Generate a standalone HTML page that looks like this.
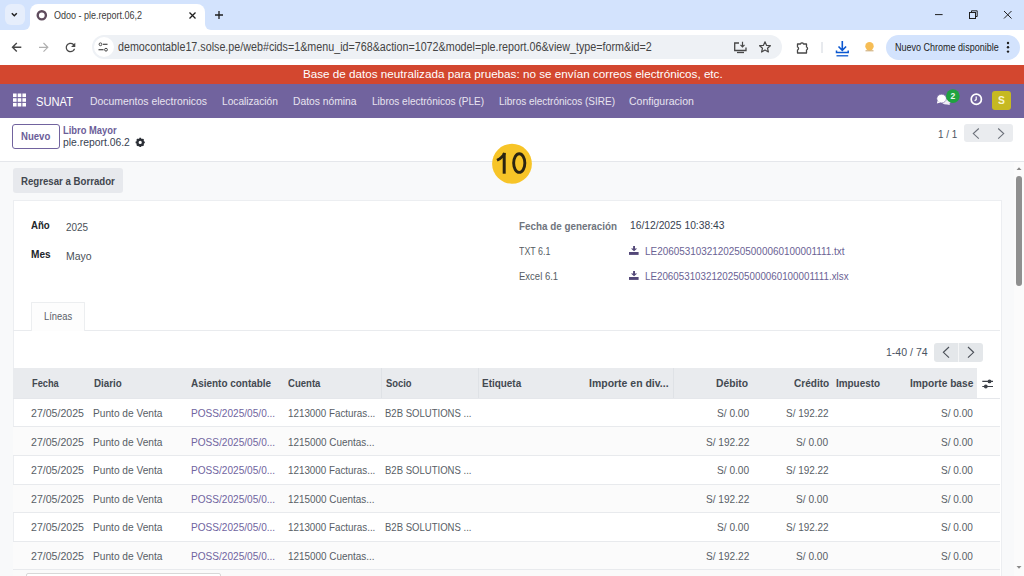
<!DOCTYPE html>
<html><head><meta charset="utf-8">
<style>
*{box-sizing:border-box;margin:0;padding:0}
html,body{width:1024px;height:576px;overflow:hidden;font-family:"Liberation Sans",sans-serif;background:#fff;position:relative}
.t{position:absolute;white-space:nowrap;line-height:1;transform-origin:0 0}
.b{position:absolute}
svg{position:absolute;overflow:visible}
</style></head><body>
<!-- tab strip -->
<div class="b" style="left:0;top:0;width:1024px;height:30px;background:#d3e3fd"></div>
<!-- active tab -->
<div class="b" style="left:30px;top:4px;width:175px;height:27px;background:#fff;border-radius:8px 8px 0 0"></div>
<div class="b" style="left:24px;top:24px;width:6px;height:6px;background:#fff"></div>
<div class="b" style="left:18px;top:18px;width:12px;height:12px;background:#d3e3fd;border-radius:0 0 6px 0"></div>
<div class="b" style="left:205px;top:24px;width:6px;height:6px;background:#fff"></div>
<div class="b" style="left:205px;top:18px;width:12px;height:12px;background:#d3e3fd;border-radius:0 0 0 6px"></div>
<div class="b" style="left:4.5px;top:4px;width:20.5px;height:21px;border-radius:6px;background:#e6eefc"></div>
<svg style="left:0;top:0" width="1024" height="30">
  <path d="M11.8 13.3 L14.3 15.8 L16.8 13.3" fill="none" stroke="#1f1f1f" stroke-width="1.5"/>
</svg>
<svg style="left:0;top:0" width="1024" height="30">
  <circle cx="41.8" cy="15.3" r="4.1" fill="none" stroke="#5f4c5d" stroke-width="2.4"/>
  <path d="M189.5 12.5 L195.5 18.5 M195.5 12.5 L189.5 18.5" stroke="#1f1f1f" stroke-width="1.3"/>
  <path d="M219 11 V19 M215 15 H223" stroke="#1f1f1f" stroke-width="1.3"/>
  <path d="M935 14.6 H942.6" stroke="#1f1f1f" stroke-width="1"/>
  <rect x="969.5" y="12.5" width="6" height="6" fill="none" stroke="#1f1f1f" stroke-width="1"/>
  <path d="M971.5 12.5 V10.8 H977.2 V16.5 H975.5" fill="none" stroke="#1f1f1f" stroke-width="1"/>
  <path d="M1004 11 L1011.5 18.5 M1011.5 11 L1004 18.5" stroke="#1f1f1f" stroke-width="1"/>
</svg>
<!-- toolbar -->
<div class="b" style="left:0;top:30px;width:1024px;height:35px;background:#fff"></div>
<div class="b" style="left:92px;top:35px;width:690px;height:24px;border-radius:12px;background:#eef1f5"></div>
<div class="b" style="left:94px;top:37px;width:20px;height:20px;border-radius:10px;background:#fff"></div>
<div class="b" style="left:886px;top:35px;width:134px;height:25px;border-radius:12.5px;background:#d3e3fd"></div>
<svg style="left:0;top:0" width="1024" height="65">
  <!-- back -->
  <path d="M21.3 47.3 H12.8 M16.8 43 L12.5 47.3 L16.8 51.6" fill="none" stroke="#474747" stroke-width="1.4"/>
  <!-- forward -->
  <path d="M39 47.3 H47.5 M43.5 43 L47.8 47.3 L43.5 51.6" fill="none" stroke="#b0b0b0" stroke-width="1.2"/>
  <!-- reload -->
  <path transform="translate(63.3 40.3) scale(0.6)" d="M17.65 6.35A7.958 7.958 0 0012 4c-4.42 0-7.99 3.58-7.99 8s3.57 8 7.99 8c3.73 0 6.84-2.55 7.73-6h-2.08A5.99 5.99 0 0112 18c-3.31 0-6-2.69-6-6s2.69-6 6-6c1.66 0 3.14.69 4.22 1.78L13 11h7V4l-2.35 2.35z" fill="#474747"/>
  <!-- tune icon -->
  <circle cx="100.5" cy="44.3" r="1.4" fill="none" stroke="#474747" stroke-width="1"/>
  <path d="M103 44.3 H107.5" stroke="#474747" stroke-width="1.2"/>
  <circle cx="106" cy="49.7" r="1.4" fill="none" stroke="#474747" stroke-width="1"/>
  <path d="M98.5 49.7 H103.6" stroke="#474747" stroke-width="1.2"/>
  <!-- install -->
  <path d="M739 43 H734.7 V50.5 H746 V47.5" fill="none" stroke="#474747" stroke-width="1.3"/>
  <path d="M737 52.5 H744" stroke="#474747" stroke-width="1.3"/>
  <path d="M742.5 41.8 V46.5 M740.5 44.8 L742.5 46.8 L744.5 44.8" fill="none" stroke="#474747" stroke-width="1.2"/>
  <!-- star -->
  <path d="M765 41.8 L766.6 45.4 L770.4 45.7 L767.5 48.2 L768.4 52 L765 50 L761.6 52 L762.5 48.2 L759.6 45.7 L763.4 45.4 Z" fill="none" stroke="#474747" stroke-width="1.2" stroke-linejoin="round"/>
  <!-- puzzle -->
  <path d="M797.5 44 H800.5 A1.6 1.6 0 0 1 803.5 44 H806.5 V47 A1.6 1.6 0 0 1 806.5 50 V53 H797.5 V50 A1.6 1.6 0 0 0 797.5 47 Z" fill="none" stroke="#474747" stroke-width="1.3" stroke-linejoin="round"/>
  <path d="M822 42 V53" stroke="#d0d5dd" stroke-width="1"/>
  <!-- download -->
  <path d="M842.3 41 V50 M838.5 46.5 L842.3 50.3 L846.1 46.5" fill="none" stroke="#0b57d0" stroke-width="1.6"/>
  <path d="M836.5 50.5 V52.5 H848.2 V50.5" fill="none" stroke="#0b57d0" stroke-width="1.5"/>
  <path d="M836.5 55.8 H848.2" stroke="#0b57d0" stroke-width="1.3"/>
  <!-- orange -->
  <circle cx="869.5" cy="46.2" r="4.2" fill="#f6bd55"/>
  <path d="M865.5 50.8 H873.5" stroke="#c9a46a" stroke-width="1"/>
  <!-- dots -->
  <circle cx="1008" cy="43" r="1.2" fill="#1f1f1f"/>
  <circle cx="1008" cy="47.3" r="1.2" fill="#1f1f1f"/>
  <circle cx="1008" cy="51.6" r="1.2" fill="#1f1f1f"/>
</svg>
<!-- banner -->
<div class="b" style="left:0;top:65px;width:1024px;height:18.5px;background:#d3472f"></div>
<!-- navbar -->
<div class="b" style="left:0;top:83.5px;width:1024px;height:34px;background:#71639e"></div>
<svg style="left:0;top:0" width="1024" height="118">
  <g fill="#fff">
    <rect x="13" y="93.5" width="3.6" height="3.6"/><rect x="17.7" y="93.5" width="3.6" height="3.6"/><rect x="22.4" y="93.5" width="3.6" height="3.6"/>
    <rect x="13" y="98.2" width="3.6" height="3.6"/><rect x="17.7" y="98.2" width="3.6" height="3.6"/><rect x="22.4" y="98.2" width="3.6" height="3.6"/>
    <rect x="13" y="102.9" width="3.6" height="3.6"/><rect x="17.7" y="102.9" width="3.6" height="3.6"/><rect x="22.4" y="102.9" width="3.6" height="3.6"/>
  </g>
  <!-- chat -->
  <ellipse cx="946.3" cy="101.8" rx="4.3" ry="2.7" fill="#f0eef8"/>
  <path d="M948.5 103.5 L950.6 104.9 L947 104.6 Z" fill="#f0eef8"/>
  <ellipse cx="941.6" cy="98.6" rx="4.8" ry="4.3" fill="#fff" stroke="#71639e" stroke-width="0.6"/>
  <path d="M937.6 100.8 L936.9 103.4 L940.2 102.5 Z" fill="#fff"/>
  <circle cx="952.9" cy="96.1" r="6.8" fill="#1fa33f"/>
  <!-- clock -->
  <circle cx="976.3" cy="99.3" r="5.1" fill="none" stroke="#fff" stroke-width="1.7"/>
  <path d="M976.2 96.4 V99.6 L974.6 100.8" fill="none" stroke="#fff" stroke-width="1.2"/>
</svg>
<div class="b" style="left:991.9px;top:90.6px;width:19.3px;height:19.3px;border-radius:3px;background:#c6b921"></div>
<!-- control panel -->
<div class="b" style="left:0;top:117.5px;width:1024px;height:43.5px;background:#fff"></div>
<div class="b" style="left:12px;top:124px;width:47.5px;height:24.5px;border:1px solid #71639e;border-radius:3px;background:#fff"></div>
<svg style="left:0;top:0" width="1024" height="160">
  <!-- gear -->
  <g transform="translate(140.2 142.4)">
    <circle r="2.75" fill="none" stroke="#2b2f36" stroke-width="2.3"/>
    <g stroke="#2b2f36" stroke-width="1.7">
      <path d="M0 -4.6 V-3 M0 4.6 V3 M-4.6 0 H-3 M4.6 0 H3 M-3.25 -3.25 L-2.1 -2.1 M3.25 3.25 L2.1 2.1 M3.25 -3.25 L2.1 -2.1 M-3.25 3.25 L-2.1 2.1"/>
    </g>
  </g>
</svg>
<div class="b" style="left:964px;top:124.3px;width:48.5px;height:18px;border-radius:3px;background:#eaecef"></div>
<svg style="left:0;top:0" width="1024" height="160">
  <path d="M978.8 128.5 L973.3 133.6 L978.8 138.7" fill="none" stroke="#6b7079" stroke-width="1.1"/>
  <path d="M998.2 128.5 L1003.7 133.6 L998.2 138.7" fill="none" stroke="#6b7079" stroke-width="1.1"/>
</svg>
<!-- main -->
<div class="b" style="left:0;top:161px;width:1024px;height:415px;background:#f8f9fa"></div>

<div class="b" style="left:12.5px;top:168px;width:110.5px;height:24.5px;border-radius:3px;background:#e7e9ed"></div>
<!-- sheet -->
<div class="b" style="left:12.5px;top:199.5px;width:989px;height:380px;background:#fff;border:1px solid #eceef1"></div>
<svg style="left:0;top:0" width="1024" height="576">
  <g fill="#534878">
    <path d="M633.1 245.9 H635 V248.6 H637.2 L634.05 251.3 L630.9 248.6 H633.1 Z"/>
    <rect x="629" y="252" width="9.6" height="2.9"/>
    <path d="M633.1 270.9 H635 V273.6 H637.2 L634.05 276.3 L630.9 273.6 H633.1 Z"/>
    <rect x="629" y="277" width="9.6" height="2.9"/>
  </g>
</svg>
<!-- tabs -->
<div class="b" style="left:13px;top:330px;width:987px;height:1px;background:#e9ebee"></div>
<div class="b" style="left:31px;top:302px;width:53.5px;height:29px;background:#fdfdfd;border:1px solid #eceef0;border-bottom:none;border-radius:1px 1px 0 0"></div>
<!-- list pager -->
<div class="b" style="left:934px;top:343px;width:48.5px;height:18.5px;border-radius:3px;background:#e4e7ea"></div>
<div class="b" style="left:958.2px;top:343px;width:1px;height:18.5px;background:#f5f6f7"></div>
<svg style="left:0;top:0" width="1024" height="576">
  <path d="M949 347 L943.4 352.3 L949 357.6" fill="none" stroke="#4b5058" stroke-width="1.15"/>
  <path d="M968 347 L973.6 352.3 L968 357.6" fill="none" stroke="#4b5058" stroke-width="1.15"/>
</svg>
<!-- table header -->
<div class="b" style="left:13px;top:368.3px;width:964px;height:30px;background:#e9ebee"></div>
<div class="b" style="left:381px;top:368.3px;width:1px;height:30px;background:#dfe2e6"></div>
<div class="b" style="left:478px;top:368.3px;width:1px;height:30px;background:#dfe2e6"></div>
<div class="b" style="left:673px;top:368.3px;width:1px;height:30px;background:#dfe2e6"></div>
<div class="b" style="left:13px;top:398px;width:987px;height:1px;background:#e5e7eb"></div>
<svg style="left:0;top:0" width="1024" height="576">
  <path d="M982.3 381.4 H993 M982.3 386.5 H993" stroke="#3d4148" stroke-width="1.1"/>
  <circle cx="989.5" cy="381.4" r="1.9" fill="#3d4148"/>
  <circle cx="985.8" cy="386.5" r="1.9" fill="#3d4148"/>
</svg>
<!-- row stripes -->
<div class="b" style="left:13px;top:427px;width:987px;height:28px;background:#fbfbfb"></div>
<div class="b" style="left:13px;top:484px;width:987px;height:28px;background:#fbfbfb"></div>
<div class="b" style="left:13px;top:541.5px;width:987px;height:28px;background:#fbfbfb"></div>
<!-- row lines -->
<div class="b" style="left:13px;top:426.2px;width:987px;height:1px;background:#e8eaed"></div>
<div class="b" style="left:13px;top:454.9px;width:987px;height:1px;background:#e8eaed"></div>
<div class="b" style="left:13px;top:483.8px;width:987px;height:1px;background:#e8eaed"></div>
<div class="b" style="left:13px;top:512.1px;width:987px;height:1px;background:#e8eaed"></div>
<div class="b" style="left:13px;top:541.1px;width:987px;height:1px;background:#e8eaed"></div>
<div class="b" style="left:13px;top:569.3px;width:987px;height:1px;background:#e8eaed"></div>
<div class="b" style="left:13px;top:570px;width:987px;height:6px;background:#fafafa"></div>
<div class="b" style="left:26px;top:573px;width:195px;height:5px;border-radius:2px;background:#fff;border:1px solid #d8d8d8"></div>
<!-- scrollbar -->
<div class="b" style="left:1013.5px;top:162px;width:10.5px;height:414px;background:#fbfbfb"></div>
<svg style="left:0;top:0" width="1024" height="576">
  <path d="M1016.5 170 L1019 167.3 L1021.5 170 Z" fill="#8a8a8a"/>
  <path d="M1016.5 566 L1019 568.7 L1021.5 566 Z" fill="#8a8a8a"/>
</svg>
<div class="b" style="left:0;top:161px;width:1024px;height:1px;background:#e5e7eb"></div>
<div class="b" style="left:1016px;top:175.5px;width:6px;height:110px;border-radius:3px;background:#8f8f8f"></div>
<!-- step badge -->
<svg style="left:0;top:0" width="1024" height="576">
  <circle cx="512" cy="163.75" r="19.9" fill="#f7c427"/>
  <path d="M504.2 152.9 V173.7" stroke="#2b2412" stroke-width="3"/>
  <path d="M497 160.2 C500.5 158.6 503.3 156.3 504.6 153" fill="none" stroke="#2b2412" stroke-width="2.8"/>
  <ellipse cx="519.25" cy="163.1" rx="5.6" ry="9.3" fill="none" stroke="#2b2412" stroke-width="2.9"/>
</svg>

<div class="t" style="left:54.00px;top:9.69px;font-size:11px;font-weight:normal;color:#3c3c3c;transform:scaleX(0.8186)">Odoo - ple.report.06,2</div>
<div class="t" style="left:118.00px;top:41.44px;font-size:12px;font-weight:normal;color:#444444;transform:scaleX(0.8939)">democontable17.solse.pe/web#cids=1&amp;menu_id=768&amp;action=1072&amp;model=ple.report.06&amp;view_type=form&amp;id=2</div>
<div class="t" style="left:895.20px;top:41.69px;font-size:11px;font-weight:normal;color:#1f1f1f;transform:scaleX(0.8193)">Nuevo Chrome disponible</div>
<div class="t" style="left:303.30px;top:69.17px;font-size:11.5px;font-weight:normal;color:#ffffff;transform:scaleX(1.0147)">Base de datos neutralizada para pruebas: no se envían correos electrónicos, etc.</div>
<div class="t" style="left:36.00px;top:95.00px;font-size:13px;font-weight:normal;color:#ffffff;transform:scaleX(0.8574)">SUNAT</div>
<div class="t" style="left:89.50px;top:95.89px;font-size:11px;font-weight:normal;color:#e8e4f0;transform:scaleX(0.9476)">Documentos electronicos</div>
<div class="t" style="left:221.60px;top:95.89px;font-size:11px;font-weight:normal;color:#e8e4f0;transform:scaleX(0.9235)">Localización</div>
<div class="t" style="left:292.60px;top:95.89px;font-size:11px;font-weight:normal;color:#e8e4f0;transform:scaleX(0.9353)">Datos nómina</div>
<div class="t" style="left:372.00px;top:95.89px;font-size:11px;font-weight:normal;color:#e8e4f0;transform:scaleX(0.9115)">Libros electrónicos (PLE)</div>
<div class="t" style="left:498.60px;top:95.89px;font-size:11px;font-weight:normal;color:#e8e4f0;transform:scaleX(0.9079)">Libros electrónicos (SIRE)</div>
<div class="t" style="left:628.80px;top:95.89px;font-size:11px;font-weight:normal;color:#e8e4f0;transform:scaleX(0.9549)">Configuracion</div>
<div class="t" style="left:950.50px;top:92.00px;font-size:8.5px;font-weight:bold;color:#e9f7ec;transform:scaleX(1.0000)">2</div>
<div class="t" style="left:997.90px;top:96.13px;font-size:10px;font-weight:bold;color:#f7f4d0;transform:scaleX(1.0286)">S</div>
<div class="t" style="left:21.05px;top:131.19px;font-size:11px;font-weight:bold;color:#6b5d98;transform:scaleX(0.8702)">Nuevo</div>
<div class="t" style="left:63.00px;top:125.11px;font-size:10.5px;font-weight:bold;color:#6b5d98;transform:scaleX(0.8916)">Libro Mayor</div>
<div class="t" style="left:63.00px;top:136.77px;font-size:11.5px;font-weight:normal;color:#374151;transform:scaleX(0.9015)">ple.report.06.2</div>
<div class="t" style="left:937.80px;top:128.69px;font-size:11px;font-weight:normal;color:#4b5563;transform:scaleX(0.9020)">1 / 1</div>
<div class="t" style="left:20.50px;top:175.69px;font-size:11px;font-weight:bold;color:#41464e;transform:scaleX(0.8774)">Regresar a Borrador</div>
<div class="t" style="left:31.00px;top:219.69px;font-size:11px;font-weight:bold;color:#212529;transform:scaleX(0.8771)">Año</div>
<div class="t" style="left:66.00px;top:221.69px;font-size:11px;font-weight:normal;color:#495057;transform:scaleX(0.9034)">2025</div>
<div class="t" style="left:31.00px;top:249.39px;font-size:11px;font-weight:bold;color:#212529;transform:scaleX(0.9163)">Mes</div>
<div class="t" style="left:66.00px;top:251.19px;font-size:11px;font-weight:normal;color:#495057;transform:scaleX(0.9522)">Mayo</div>
<div class="t" style="left:519.40px;top:220.61px;font-size:10.5px;font-weight:bold;color:#70757d;transform:scaleX(0.9381)">Fecha de generación</div>
<div class="t" style="left:629.60px;top:220.19px;font-size:11px;font-weight:normal;color:#374151;transform:scaleX(0.9364)">16/12/2025 10:38:43</div>
<div class="t" style="left:519.40px;top:245.99px;font-size:11px;font-weight:normal;color:#555b63;transform:scaleX(0.8076)">TXT 6.1</div>
<div class="t" style="left:519.40px;top:270.99px;font-size:11px;font-weight:normal;color:#555b63;transform:scaleX(0.8642)">Excel 6.1</div>
<div class="t" style="left:645.00px;top:245.99px;font-size:11px;font-weight:normal;color:#6a6294;transform:scaleX(0.9012)">LE20605310321202505000060100001111.txt</div>
<div class="t" style="left:645.00px;top:270.99px;font-size:11px;font-weight:normal;color:#6a6294;transform:scaleX(0.8898)">LE20605310321202505000060100001111.xlsx</div>
<div class="t" style="left:43.50px;top:311.19px;font-size:11px;font-weight:normal;color:#5b6068;transform:scaleX(0.8501)">Líneas</div>
<div class="t" style="left:886.00px;top:347.19px;font-size:11px;font-weight:normal;color:#4b5563;transform:scaleX(0.9584)">1-40 / 74</div>
<div class="t" style="left:31.50px;top:378.19px;font-size:11px;font-weight:bold;color:#434951;transform:scaleX(0.8417)">Fecha</div>
<div class="t" style="left:94.00px;top:378.19px;font-size:11px;font-weight:bold;color:#434951;transform:scaleX(0.8902)">Diario</div>
<div class="t" style="left:191.00px;top:378.19px;font-size:11px;font-weight:bold;color:#434951;transform:scaleX(0.9039)">Asiento contable</div>
<div class="t" style="left:288.40px;top:378.19px;font-size:11px;font-weight:bold;color:#434951;transform:scaleX(0.8700)">Cuenta</div>
<div class="t" style="left:385.50px;top:378.19px;font-size:11px;font-weight:bold;color:#434951;transform:scaleX(0.8535)">Socio</div>
<div class="t" style="left:482.00px;top:378.19px;font-size:11px;font-weight:bold;color:#434951;transform:scaleX(0.9034)">Etiqueta</div>
<div class="t" style="left:588.50px;top:378.19px;font-size:11px;font-weight:bold;color:#434951;transform:scaleX(0.9524)">Importe en div...</div>
<div class="t" style="left:716.00px;top:378.19px;font-size:11px;font-weight:bold;color:#434951;transform:scaleX(0.9362)">Débito</div>
<div class="t" style="left:793.50px;top:378.19px;font-size:11px;font-weight:bold;color:#434951;transform:scaleX(0.9154)">Crédito</div>
<div class="t" style="left:836.40px;top:378.19px;font-size:11px;font-weight:bold;color:#434951;transform:scaleX(0.9009)">Impuesto</div>
<div class="t" style="left:909.50px;top:378.19px;font-size:11px;font-weight:bold;color:#434951;transform:scaleX(0.9247)">Importe base</div>
<div class="t" style="left:31.25px;top:408.29px;font-size:11px;font-weight:normal;color:#585e66;transform:scaleX(0.9611)">27/05/2025</div>
<div class="t" style="left:93.40px;top:408.29px;font-size:11px;font-weight:normal;color:#585e66;transform:scaleX(0.9236)">Punto de Venta</div>
<div class="t" style="left:191.10px;top:408.29px;font-size:11px;font-weight:normal;color:#7064a0;transform:scaleX(0.9174)">POSS/2025/05/0...</div>
<div class="t" style="left:288.40px;top:408.29px;font-size:11px;font-weight:normal;color:#585e66;transform:scaleX(0.8928)">1213000 Facturas...</div>
<div class="t" style="left:385.10px;top:408.29px;font-size:11px;font-weight:normal;color:#585e66;transform:scaleX(0.8676)">B2B SOLUTIONS ...</div>
<div class="t" style="left:717.20px;top:408.29px;font-size:11px;font-weight:normal;color:#585e66;transform:scaleX(0.9211)">S/ 0.00</div>
<div class="t" style="left:785.80px;top:408.29px;font-size:11px;font-weight:normal;color:#585e66;transform:scaleX(0.9047)">S/ 192.22</div>
<div class="t" style="left:941.00px;top:408.29px;font-size:11px;font-weight:normal;color:#585e66;transform:scaleX(0.9125)">S/ 0.00</div>
<div class="t" style="left:31.25px;top:436.74px;font-size:11px;font-weight:normal;color:#585e66;transform:scaleX(0.9611)">27/05/2025</div>
<div class="t" style="left:93.40px;top:436.74px;font-size:11px;font-weight:normal;color:#585e66;transform:scaleX(0.9236)">Punto de Venta</div>
<div class="t" style="left:191.10px;top:436.74px;font-size:11px;font-weight:normal;color:#7064a0;transform:scaleX(0.9174)">POSS/2025/05/0...</div>
<div class="t" style="left:288.40px;top:436.74px;font-size:11px;font-weight:normal;color:#585e66;transform:scaleX(0.9003)">1215000 Cuentas...</div>
<div class="t" style="left:706.00px;top:436.74px;font-size:11px;font-weight:normal;color:#585e66;transform:scaleX(0.9196)">S/ 192.22</div>
<div class="t" style="left:796.30px;top:436.74px;font-size:11px;font-weight:normal;color:#585e66;transform:scaleX(0.9211)">S/ 0.00</div>
<div class="t" style="left:941.00px;top:436.74px;font-size:11px;font-weight:normal;color:#585e66;transform:scaleX(0.9125)">S/ 0.00</div>
<div class="t" style="left:31.25px;top:465.19px;font-size:11px;font-weight:normal;color:#585e66;transform:scaleX(0.9611)">27/05/2025</div>
<div class="t" style="left:93.40px;top:465.19px;font-size:11px;font-weight:normal;color:#585e66;transform:scaleX(0.9236)">Punto de Venta</div>
<div class="t" style="left:191.10px;top:465.19px;font-size:11px;font-weight:normal;color:#7064a0;transform:scaleX(0.9174)">POSS/2025/05/0...</div>
<div class="t" style="left:288.40px;top:465.19px;font-size:11px;font-weight:normal;color:#585e66;transform:scaleX(0.8928)">1213000 Facturas...</div>
<div class="t" style="left:385.10px;top:465.19px;font-size:11px;font-weight:normal;color:#585e66;transform:scaleX(0.8676)">B2B SOLUTIONS ...</div>
<div class="t" style="left:717.20px;top:465.19px;font-size:11px;font-weight:normal;color:#585e66;transform:scaleX(0.9211)">S/ 0.00</div>
<div class="t" style="left:785.80px;top:465.19px;font-size:11px;font-weight:normal;color:#585e66;transform:scaleX(0.9047)">S/ 192.22</div>
<div class="t" style="left:941.00px;top:465.19px;font-size:11px;font-weight:normal;color:#585e66;transform:scaleX(0.9125)">S/ 0.00</div>
<div class="t" style="left:31.25px;top:493.64px;font-size:11px;font-weight:normal;color:#585e66;transform:scaleX(0.9611)">27/05/2025</div>
<div class="t" style="left:93.40px;top:493.64px;font-size:11px;font-weight:normal;color:#585e66;transform:scaleX(0.9236)">Punto de Venta</div>
<div class="t" style="left:191.10px;top:493.64px;font-size:11px;font-weight:normal;color:#7064a0;transform:scaleX(0.9174)">POSS/2025/05/0...</div>
<div class="t" style="left:288.40px;top:493.64px;font-size:11px;font-weight:normal;color:#585e66;transform:scaleX(0.9003)">1215000 Cuentas...</div>
<div class="t" style="left:706.00px;top:493.64px;font-size:11px;font-weight:normal;color:#585e66;transform:scaleX(0.9196)">S/ 192.22</div>
<div class="t" style="left:796.30px;top:493.64px;font-size:11px;font-weight:normal;color:#585e66;transform:scaleX(0.9211)">S/ 0.00</div>
<div class="t" style="left:941.00px;top:493.64px;font-size:11px;font-weight:normal;color:#585e66;transform:scaleX(0.9125)">S/ 0.00</div>
<div class="t" style="left:31.25px;top:522.09px;font-size:11px;font-weight:normal;color:#585e66;transform:scaleX(0.9611)">27/05/2025</div>
<div class="t" style="left:93.40px;top:522.09px;font-size:11px;font-weight:normal;color:#585e66;transform:scaleX(0.9236)">Punto de Venta</div>
<div class="t" style="left:191.10px;top:522.09px;font-size:11px;font-weight:normal;color:#7064a0;transform:scaleX(0.9174)">POSS/2025/05/0...</div>
<div class="t" style="left:288.40px;top:522.09px;font-size:11px;font-weight:normal;color:#585e66;transform:scaleX(0.8928)">1213000 Facturas...</div>
<div class="t" style="left:385.10px;top:522.09px;font-size:11px;font-weight:normal;color:#585e66;transform:scaleX(0.8676)">B2B SOLUTIONS ...</div>
<div class="t" style="left:717.20px;top:522.09px;font-size:11px;font-weight:normal;color:#585e66;transform:scaleX(0.9211)">S/ 0.00</div>
<div class="t" style="left:785.80px;top:522.09px;font-size:11px;font-weight:normal;color:#585e66;transform:scaleX(0.9047)">S/ 192.22</div>
<div class="t" style="left:941.00px;top:522.09px;font-size:11px;font-weight:normal;color:#585e66;transform:scaleX(0.9125)">S/ 0.00</div>
<div class="t" style="left:31.25px;top:550.54px;font-size:11px;font-weight:normal;color:#585e66;transform:scaleX(0.9611)">27/05/2025</div>
<div class="t" style="left:93.40px;top:550.54px;font-size:11px;font-weight:normal;color:#585e66;transform:scaleX(0.9236)">Punto de Venta</div>
<div class="t" style="left:191.10px;top:550.54px;font-size:11px;font-weight:normal;color:#7064a0;transform:scaleX(0.9174)">POSS/2025/05/0...</div>
<div class="t" style="left:288.40px;top:550.54px;font-size:11px;font-weight:normal;color:#585e66;transform:scaleX(0.9003)">1215000 Cuentas...</div>
<div class="t" style="left:706.00px;top:550.54px;font-size:11px;font-weight:normal;color:#585e66;transform:scaleX(0.9196)">S/ 192.22</div>
<div class="t" style="left:796.30px;top:550.54px;font-size:11px;font-weight:normal;color:#585e66;transform:scaleX(0.9211)">S/ 0.00</div>
<div class="t" style="left:941.00px;top:550.54px;font-size:11px;font-weight:normal;color:#585e66;transform:scaleX(0.9125)">S/ 0.00</div>
</body></html>
